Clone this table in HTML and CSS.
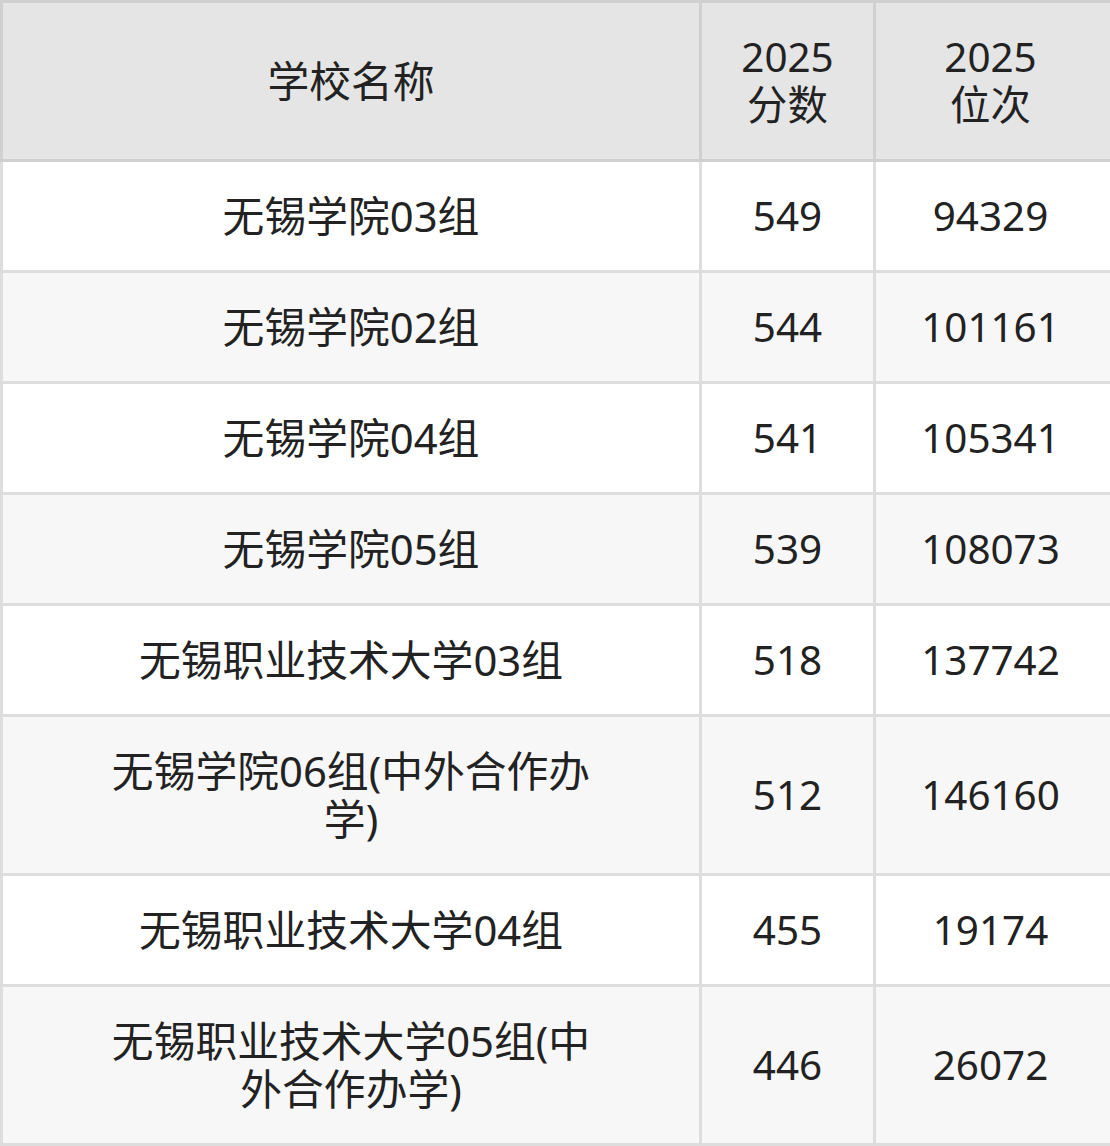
FILE: index.html
```html
<!DOCTYPE html>
<html lang="zh">
<head>
<meta charset="utf-8">
<link rel="stylesheet" href="styles.css">
</head>
<body>
<table class="score-table">
  <colgroup>
    <col class="col-name">
    <col class="col-score">
    <col class="col-rank">
  </colgroup>
  <thead>
    <tr>
      <th class="name">学校名称</th>
      <th>2025<br>分数</th>
      <th class="rank">2025<br>位次</th>
    </tr>
  </thead>
  <tbody>
    <tr><td class="name">无锡学院03组</td><td>549</td><td class="rank">94329</td></tr>
    <tr><td class="name">无锡学院02组</td><td>544</td><td class="rank">101161</td></tr>
    <tr><td class="name">无锡学院04组</td><td>541</td><td class="rank">105341</td></tr>
    <tr><td class="name">无锡学院05组</td><td>539</td><td class="rank">108073</td></tr>
    <tr><td class="name">无锡职业技术大学03组</td><td>518</td><td class="rank">137742</td></tr>
    <tr><td class="name">无锡学院06组(中外合作办学)</td><td>512</td><td class="rank">146160</td></tr>
    <tr><td class="name">无锡职业技术大学04组</td><td>455</td><td class="rank">19174</td></tr>
    <tr><td class="name">无锡职业技术大学05组(中外合作办学)</td><td>446</td><td class="rank">26072</td></tr>
  </tbody>
</table>
</body>
</html>
```

FILE: styles.css
```css
html, body {
  margin: 0;
  padding: 0;
  background: #ffffff;
}

.score-table {
  border-collapse: collapse;
  table-layout: fixed;
  width: 1110px;
  font-family: "Noto Sans", "Noto Sans CJK SC", sans-serif;
  font-size: 40.4px;
  line-height: 48px;
  color: #222222;
}

.col-name { width: 699px; }
.col-score { width: 174px; }
.col-rank { width: 237px; }

.score-table th,
.score-table td {
  border: 3px solid #dddddd;
  padding: 30px 4px;
  text-align: center;
  vertical-align: middle;
  font-weight: normal;
}

.score-table th {
  background: #e5e5e5;
  border-color: #d0d0d0;
}

.score-table .name {
  font-size: 41.8px;
  padding-left: 100px;
  padding-right: 100px;
}

.score-table .rank {
  padding-left: 2px;
  padding-right: 7px;
}

.score-table tbody tr:nth-child(even) td {
  background: #f7f7f7;
}
```
